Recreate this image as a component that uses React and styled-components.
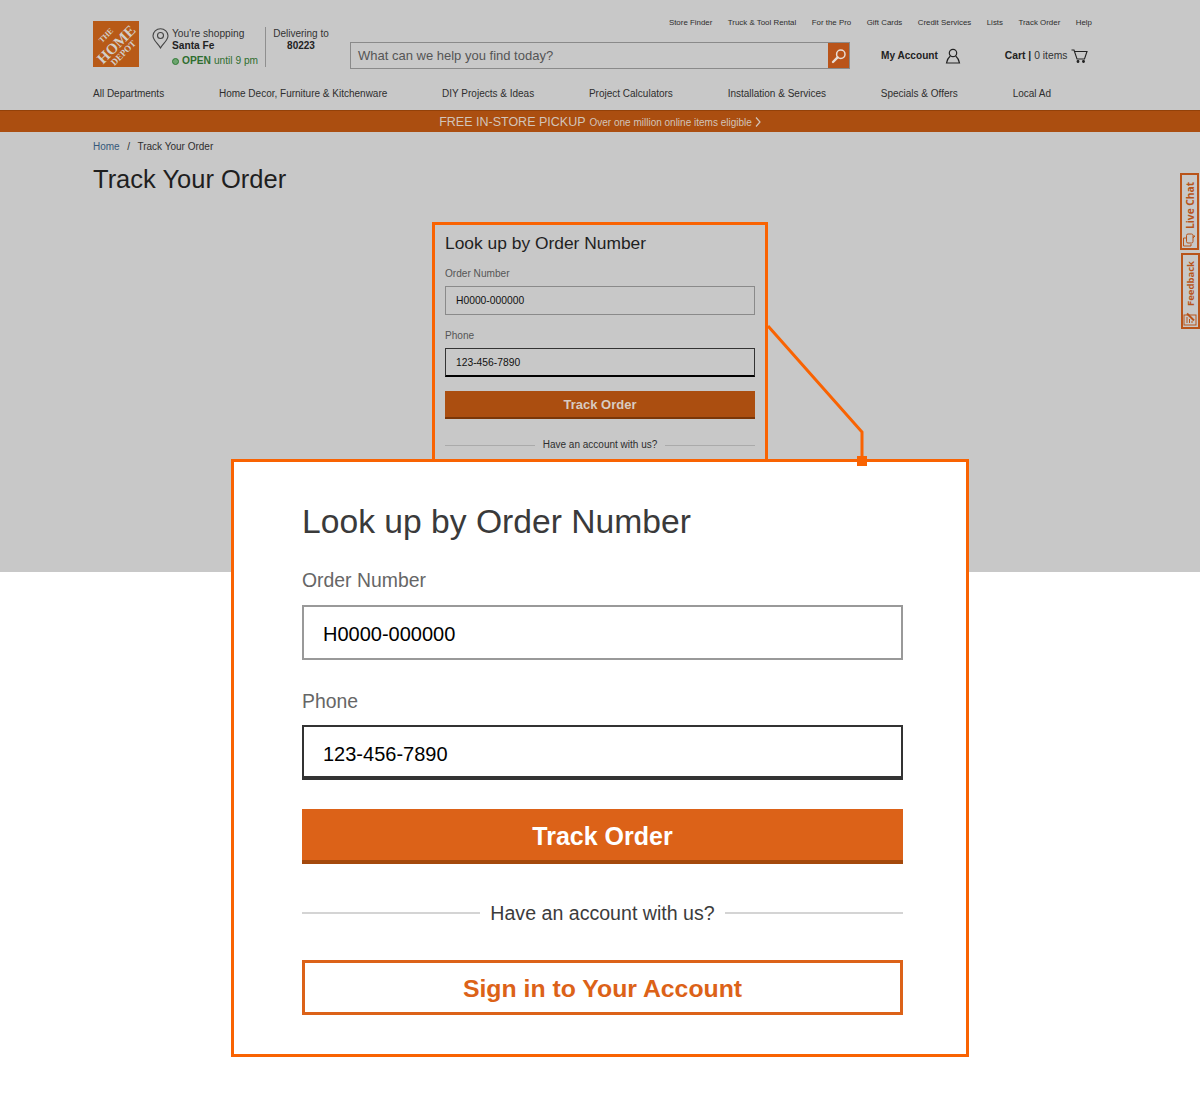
import React from 'react';
import styled, { createGlobalStyle } from 'styled-components';

const GlobalStyle = createGlobalStyle`
  html, body {
    margin: 0;
    padding: 0;
    background: #fff;
    font-family: "Liberation Sans", Arial, sans-serif;
    color: #333;
  }
  * { box-sizing: border-box; }
`;

const Page = styled.div`
  position: relative;
  width: 1200px;
  height: 1093px;
  overflow: hidden;
`;

const Dimmed = styled.div`
  height: 572px;
  background: #c8c8c8;
`;

const Header = styled.header`
  display: flex;
  flex-direction: column;
  padding: 0 108px 0 93px;
`;

const UtilityBar = styled.nav`
  display: flex;
  justify-content: flex-end;
  gap: 15.5px;
  height: 15px;
  margin-top: 17px;
  font-size: 7.9px;
  line-height: 11px;
  color: #2e2e2e;
`;

const MainRow = styled.div`
  display: flex;
  align-items: flex-start;
  height: 35px;
  margin-top: -11px;
`;

const LogoBox = styled.svg`
  flex: none;
  width: 46px;
  height: 46px;
`;

const Store = styled.div`
  display: flex;
  margin-left: 13px;
  margin-top: 6px;
  width: 114px;
  height: 40px;
  border-right: 1px solid #8f8f8f;
`;

const PinIcon = styled.svg`
  flex: none;
  width: 17px;
  height: 21px;
  margin: 1px 3px 0 0;
`;

const StoreText = styled.div`
  padding-top: 1px;
  font-size: 10.2px;
  line-height: 12px;
  color: #333;
  white-space: nowrap;
  b { display: block; color: #222; }
`;

const OpenLine = styled.div`
  display: flex;
  align-items: center;
  margin-top: 3px;
  color: #2f6e2f;
  b { color: #2f6e2f; margin-right: 3px; }
`;

const OpenDot = styled.span`
  width: 7px;
  height: 7px;
  margin-right: 3px;
  border-radius: 50%;
  background: #6da56f;
  border: 1px solid #2f7a35;
`;

const Delivery = styled.div`
  width: 70px;
  margin-top: 7px;
  font-size: 10px;
  line-height: 12px;
  white-space: nowrap;
  text-align: center;
  b { display: block; color: #222; }
`;

const SearchBar = styled.div`
  flex: none;
  display: flex;
  align-items: stretch;
  width: 500px;
  height: 27px;
  margin-top: 21px;
  margin-left: 14px;
  border: 1px solid #8a8a8a;
`;

const SearchText = styled.div`
  flex: 1;
  padding-left: 7px;
  font-size: 13px;
  line-height: 25px;
  color: #555;
`;

const SearchButton = styled.div`
  display: flex;
  align-items: center;
  justify-content: center;
  width: 21px;
  background: #b9541a;
`;

const Account = styled.div`
  display: flex;
  align-items: center;
  height: 27px;
  margin-top: 21px;
  margin-left: 31px;
  font-size: 10.1px;
  color: #222;
  font-weight: bold;
  svg { margin-left: 7px; }
`;

const Cart = styled.div`
  display: flex;
  align-items: center;
  height: 27px;
  margin-top: 21px;
  margin-left: 44px;
  font-size: 10.3px;
  color: #333;
  white-space: nowrap;
  b { color: #222; margin-right: 3px; }
  svg { margin-left: 4px; }
`;

const MainNav = styled.nav`
  display: flex;
  justify-content: space-between;
  margin-top: 31px;
  padding-right: 41px;
  height: 23px;
  font-size: 10px;
  line-height: 13px;
  color: #2e2e2e;
`;

const Promo = styled.div`
  display: flex;
  align-items: center;
  justify-content: center;
  height: 22px;
  background: #ab4e10;
  border-top: 1px solid #934109;
  color: #d2c4ba;
  font-size: 12.5px;
  svg { margin-left: 3px; }
`;

const PromoSmall = styled.span`
  font-size: 10px;
  margin-left: 4px;
  margin-top: 1px;
`;

const Main = styled.main`
  padding: 8px 93px 0;
`;

const Crumbs = styled.div`
  display: flex;
  gap: 7.5px;
  font-size: 10px;
  line-height: 13px;
  color: #2e2e2e;
`;

const CrumbLink = styled.span`
  color: #35587a;
`;

const PageTitle = styled.h1`
  margin: 11px 0 0;
  font-size: 25.5px;
  line-height: 30px;
  font-weight: normal;
  color: #1f1f1f;
`;

/* same form at two scales: reference card and the enlarged callout */
const FormCard = styled.section`
  width: 336px;
  height: 240px;
  margin: 28px auto 0;
  padding: 7px 10px 0;
  border: 3px solid #f96302;
`;

const CardTitle = styled.h2`
  margin: 0 0 13px;
  font-size: 17.4px;
  line-height: 22px;
  font-weight: normal;
  color: #1f1f1f;
`;

const CardLabel = styled.div`
  font-size: 10.1px;
  line-height: 13px;
  color: #555;
  & + div { margin-top: 6px; }
`;

const CardInput = styled.div`
  height: 29px;
  padding-left: 10px;
  border: 1px solid ${({ $active }) => ($active ? '#333' : '#8a8a8a')};
  border-bottom-width: ${({ $active }) => ($active ? '2px' : '1px')};
  border-bottom-color: ${({ $active }) => ($active ? '#000' : '#8a8a8a')};
  font-size: 10.3px;
  line-height: 27px;
  color: #111;
  & + ${CardLabel} { margin-top: 14px; }
`;

const CardButton = styled.div`
  height: 28px;
  margin-top: 14px;
  background: #ab4e10;
  border-bottom: 2px solid #7a3608;
  color: #d8cbc2;
  font-size: 13px;
  font-weight: bold;
  line-height: 27px;
  text-align: center;
`;

const CardDivider = styled.div`
  display: flex;
  align-items: center;
  gap: 8px;
  margin-top: 19px;
  font-size: 10px;
  line-height: 14px;
  color: #2e2e2e;
  &::before, &::after {
    content: '';
    flex: 1;
    height: 1px;
    background: #aaa;
  }
`;

const SideTabs = styled.div`
  position: absolute;
  top: 173px;
  right: 0;
  display: flex;
  flex-direction: column;
  align-items: flex-end;
  gap: 3px;
`;

const SideTab = styled.div`
  display: flex;
  align-items: center;
  justify-content: flex-start;
  gap: ${({ $gap }) => $gap}px;
  width: 19px;
  height: ${({ $h }) => $h}px;
  margin-right: ${({ $mr }) => $mr}px;
  padding-top: 1px;
  border: 2px solid #b9541a;
  background: #c8c8c8;
  color: #b9541a;
  font-family: "Open Sans", sans-serif;
  font-size: ${({ $size }) => $size}px;
  font-weight: bold;
  writing-mode: vertical-rl;
  transform: rotate(180deg);
  white-space: nowrap;
  svg { transform: rotate(90deg); flex: none; }
`;

const Connector = styled.svg`
  position: absolute;
  left: 760px;
  top: 320px;
  width: 115px;
  height: 150px;
`;

const Callout = styled.section`
  position: absolute;
  left: 231px;
  top: 459px;
  width: 738px;
  height: 598px;
  padding: 40px 63px 0 68px;
  background: #fff;
  border: 3px solid #f96302;
`;

const CalloutTitle = styled.h2`
  margin: 0;
  font-size: 33.65px;
  line-height: 40px;
  font-weight: normal;
  color: #3a3a3a;
`;

const CalloutLabel = styled.div`
  margin-top: ${({ $tight }) => ($tight ? '29px' : '26px')};
  font-size: 19.4px;
  line-height: ${({ $tight }) => ($tight ? '24px' : '25px')};
  color: #666;
`;

const CalloutInput = styled.div`
  height: 55px;
  margin-top: 12px;
  padding-left: 19px;
  border: 2px solid ${({ $active }) => ($active ? '#333' : '#999')};
  border-bottom-width: ${({ $active }) => ($active ? '4px' : '2px')};
  font-size: 20px;
  line-height: 54px;
  color: #000;
`;

const PrimaryButton = styled.div`
  height: 55px;
  margin-top: 29px;
  background: #dc6218;
  border-bottom: 4px solid #a4490c;
  color: #fff;
  font-size: 25px;
  font-weight: bold;
  line-height: 54px;
  text-align: center;
`;

const CalloutDivider = styled.div`
  display: flex;
  align-items: center;
  gap: 10px;
  margin-top: 37px;
  font-size: 19.6px;
  line-height: 24px;
  color: #3c3c3c;
  &::before, &::after {
    content: '';
    flex: 1;
    height: 2px;
    background: #d4d4d4;
  }
`;

const SecondaryButton = styled.div`
  height: 55px;
  margin-top: 35px;
  border: 3px solid #dc6218;
  color: #dc6218;
  font-size: 24.8px;
  font-weight: bold;
  line-height: 52px;
  text-align: center;
`;

const utilityLinks = ['Store Finder', 'Truck & Tool Rental', 'For the Pro', 'Gift Cards', 'Credit Services', 'Lists', 'Track Order', 'Help'];
const navLinks = ['All Departments', 'Home Decor, Furniture & Kitchenware', 'DIY Projects & Ideas', 'Project Calculators', 'Installation & Services', 'Specials & Offers', 'Local Ad'];

const Logo = () => (
  <LogoBox viewBox="0 0 46 46">
    <rect width="46" height="46" fill="#b85a17" />
    <g transform="rotate(-45 23 23)" fill="#d2cec9" fontFamily="Liberation Serif, serif" fontWeight="bold" textAnchor="middle">
      <text x="22" y="12.5" fontSize="8">THE</text>
      <text x="23" y="28.5" fontSize="15">HOME</text>
      <text x="22" y="37.5" fontSize="9">DEPOT</text>
    </g>
  </LogoBox>
);

const App = () => (
  <Page>
    <GlobalStyle />
    <Dimmed>
      <Header>
        <UtilityBar>
          {utilityLinks.map((link) => <span key={link}>{link}</span>)}
        </UtilityBar>
        <MainRow>
          <Logo />
          <Store>
            <PinIcon viewBox="0 0 17 21" fill="none" stroke="#444" strokeWidth="1.1">
              <path d="M8.5 20 C6 15.5 1 12.5 1 7.8 A7.5 7 0 0 1 16 7.8 C16 12.5 11 15.5 8.5 20 Z" />
              <circle cx="8.5" cy="7.5" r="3" />
            </PinIcon>
            <StoreText>
              You're shopping
              <b>Santa Fe</b>
              <OpenLine><OpenDot /><b>OPEN</b> until 9 pm</OpenLine>
            </StoreText>
          </Store>
          <Delivery>
            Delivering to
            <b>80223</b>
          </Delivery>
          <SearchBar>
            <SearchText>What can we help you find today?</SearchText>
            <SearchButton>
              <svg width="16" height="16" viewBox="0 0 16 16" fill="none" stroke="#e8ddd5">
                <circle cx="9.8" cy="6.2" r="4.2" strokeWidth="1.5" />
                <path d="M6.6 9.4 L2 14" strokeWidth="2.4" strokeLinecap="round" />
              </svg>
            </SearchButton>
          </SearchBar>
          <Account>
            My Account
            <svg width="16" height="16" viewBox="0 0 16 16" fill="none" stroke="#222" strokeWidth="1.2">
              <circle cx="8" cy="5" r="3.7" />
              <path d="M5.3 8 C3.5 9.5 2.2 11.5 1.5 15 H14.5 C13.8 11.5 12.5 9.5 10.7 8" />
            </svg>
          </Account>
          <Cart>
            <b>Cart |</b> 0 items
            <svg width="17" height="14" viewBox="0 0 17 14" fill="none" stroke="#222" strokeWidth="1.1">
              <path d="M0.5 1 H3 L6 10 H13.5 L16 2.5 H3.5" />
              <circle cx="7" cy="12.5" r="0.9" fill="#222" />
              <circle cx="12.5" cy="12.5" r="0.9" fill="#222" />
            </svg>
          </Cart>
        </MainRow>
        <MainNav>
          {navLinks.map((link) => <span key={link}>{link}</span>)}
        </MainNav>
      </Header>
      <Promo>
        FREE IN-STORE PICKUP
        <PromoSmall>Over one million online items eligible</PromoSmall>
        <svg width="6" height="10" viewBox="0 0 6 10" fill="none" stroke="#d2c4ba" strokeWidth="1.2">
          <path d="M1 0.5 L5 5 L1 9.5" />
        </svg>
      </Promo>
      <Main>
        <Crumbs>
          <CrumbLink>Home</CrumbLink>
          <span>/</span>
          <span>Track Your Order</span>
        </Crumbs>
        <PageTitle>Track Your Order</PageTitle>
        <FormCard>
          <CardTitle>Look up by Order Number</CardTitle>
          <CardLabel>Order Number</CardLabel>
          <CardInput>H0000-000000</CardInput>
          <CardLabel>Phone</CardLabel>
          <CardInput $active>123-456-7890</CardInput>
          <CardButton>Track Order</CardButton>
          <CardDivider>Have an account with us?</CardDivider>
        </FormCard>
      </Main>
    </Dimmed>

    <SideTabs>
      <SideTab $h={77} $mr={1} $gap={4} $size={10.2}>
        <svg width="14" height="14" viewBox="0 0 14 14" fill="none" stroke="#b9541a" strokeWidth="1">
          <path d="M1 1.5 H9 V5" />
          <path d="M1 1.5 V9 H3" />
          <rect x="4" y="4.5" width="9" height="6.5" rx="1.5" />
          <path d="M9 11 L11 13 V11" />
        </svg>
        Live Chat
      </SideTab>
      <SideTab $h={76} $mr={0} $gap={6} $size={9.5}>
        <svg width="14" height="14" viewBox="0 0 14 14" fill="none" stroke="#b9541a" strokeWidth="1">
          <rect x="1" y="1" width="10" height="12" />
          <path d="M3 4 H9 M3 6.5 H7 M3 9 H5" />
          <path d="M5.5 11 L12.5 4" strokeWidth="2" />
        </svg>
        Feedback
      </SideTab>
    </SideTabs>

    <Callout>
      <CalloutTitle>Look up by Order Number</CalloutTitle>
      <CalloutLabel>Order Number</CalloutLabel>
      <CalloutInput>H0000-000000</CalloutInput>
      <CalloutLabel $tight>Phone</CalloutLabel>
      <CalloutInput $active>123-456-7890</CalloutInput>
      <PrimaryButton>Track Order</PrimaryButton>
      <CalloutDivider>Have an account with us?</CalloutDivider>
      <SecondaryButton>Sign in to Your Account</SecondaryButton>
    </Callout>

    <Connector viewBox="0 0 115 150">
      <path d="M8 6 L102 112 V140" fill="none" stroke="#f96302" strokeWidth="3" />
      <rect x="97" y="136" width="10" height="10" fill="#f96302" />
    </Connector>
  </Page>
);

export default App;
